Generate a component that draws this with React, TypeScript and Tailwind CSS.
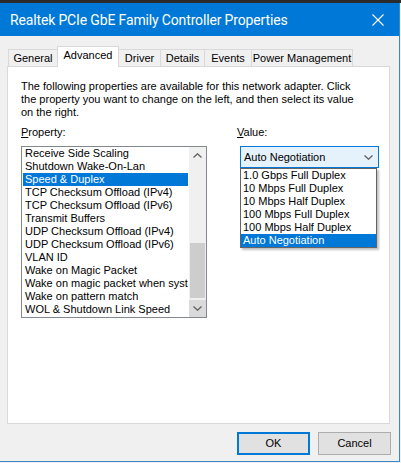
import React from "react";

const items = [
  "Receive Side Scaling",
  "Shutdown Wake-On-Lan",
  "Speed & Duplex",
  "TCP Checksum Offload (IPv4)",
  "TCP Checksum Offload (IPv6)",
  "Transmit Buffers",
  "UDP Checksum Offload (IPv4)",
  "UDP Checksum Offload (IPv6)",
  "VLAN ID",
  "Wake on Magic Packet",
  "Wake on magic packet when system is in the S0ix power state",
  "Wake on pattern match",
  "WOL & Shutdown Link Speed",
];

const values = [
  "1.0 Gbps Full Duplex",
  "10 Mbps Full Duplex",
  "10 Mbps Half Duplex",
  "100 Mbps Full Duplex",
  "100 Mbps Half Duplex",
  "Auto Negotiation",
];

const tabs = [
  { label: "General", w: "w-[49px]" },
  { label: "Advanced", w: "w-[62px]", active: true },
  { label: "Driver", w: "w-[41px]" },
  { label: "Details", w: "w-[44px]" },
  { label: "Events", w: "w-[47px]" },
  { label: "Power Management", w: "w-[102px]" },
];

function Chevron({ up = false, className = "" }: { up?: boolean; className?: string }) {
  return (
    <svg width="9" height="5" viewBox="0 0 9 5" className={className}>
      <path
        d={up ? "M0.5 4.5 L4.5 0.8 L8.5 4.5" : "M0.5 0.5 L4.5 4.2 L8.5 0.5"}
        fill="none"
        stroke="#606060"
        strokeWidth="1.3"
      />
    </svg>
  );
}

export default function App() {
  return (
    <div className="w-[401px] h-[463px] bg-[#f0f0f0] font-['Liberation_Sans',Arial,sans-serif] text-[11px] leading-[13px] text-black overflow-hidden">
      <div className="h-[3px] bg-[#2b2b2b]" />
      <div className="w-[400px] h-[459px] flex flex-col border-r border-b border-[#3a87c7]">
        {/* Title bar */}
        <div className="h-[33px] shrink-0 bg-[#0078d7] flex items-center justify-between pl-[10px] pr-[15px]">
          <span className="font-['Roboto',sans-serif] text-[14px] tracking-[-0.15px] leading-[20px] text-white">
            Realtek PCIe GbE Family Controller Properties
          </span>
          <svg width="12" height="12" viewBox="0 0 12 12">
            <path d="M0.5 0.5 L11.5 11.5 M11.5 0.5 L0.5 11.5" stroke="white" strokeWidth="1.1" />
          </svg>
        </div>

        {/* Tabs */}
        <div className="mt-[10px] pl-[8px] flex items-end h-[21px] -mb-[1px] relative z-10">
          {tabs.map((t, i) =>
            t.active ? (
              <div
                key={t.label}
                className={`${t.w} h-[21px] bg-white border border-b-0 border-[#d9d9d9] flex justify-center pt-[2px]`}
              >
                {t.label}
              </div>
            ) : (
              <div
                key={t.label}
                className={`${t.w} h-[17px] mb-[1px] bg-[#f0f0f0] border-t border-[#d9d9d9] ${
                  i === 2 ? "" : "border-l"
                } ${i === tabs.length - 1 ? "border-r" : ""} flex items-center justify-center`}
              >
                {t.label}
              </div>
            )
          )}
        </div>

        {/* Panel */}
        <div className="ml-[7px] w-[383px] h-[358px] shrink-0 bg-white border border-[#d9d9d9] pl-[13px] pt-[13px]">
          <div className="whitespace-nowrap">
            The following properties are available for this network adapter. Click
            <br />
            the property you want to change on the left, and then select its value
            <br />
            on the right.
          </div>

          <div className="flex mt-[7px]">
            {/* Property column */}
            <div className="w-[216px] shrink-0">
              <div>
                <span className="underline underline-offset-[1px]">P</span>roperty:
              </div>
              <div className="mt-[7px] w-[186px] h-[172px] border border-[#828790] flex">
                <div className="flex-1 min-w-0 p-[1px] pt-0 overflow-hidden">
                  {items.map((it) => (
                    <div
                      key={it}
                      className={`h-[13px] pl-[2px] whitespace-nowrap overflow-hidden ${
                        it === "Speed & Duplex" ? "bg-[#0078d7] text-white" : ""
                      }`}
                    >
                      {it}
                    </div>
                  ))}
                </div>
                <div className="w-[17px] shrink-0 bg-[#f0f0f0] flex flex-col">
                  <div className="h-[17px] flex items-center justify-center">
                    <Chevron up />
                  </div>
                  <div className="flex-1 relative flex flex-col">
                    <div className="h-[79px]" />
                    <div className="h-[55px] mx-[1px] bg-[#cdcdcd]" />
                  </div>
                  <div className="h-[17px] bg-[#dadada] flex items-center justify-center">
                    <Chevron />
                  </div>
                </div>
              </div>
            </div>

            {/* Value column */}
            <div>
              <div>
                <span className="underline underline-offset-[1px]">V</span>alue:
              </div>
              <div className="mt-[7px] ml-[3px] relative w-[139px]">
                <div className="h-[22px] border border-[#0078d7] bg-[#e5f1fb] flex items-center justify-between pl-[3px] pr-[5px]">
                  <span>Auto Negotiation</span>
                  <Chevron />
                </div>
                <div className="absolute left-0 top-[22px] w-[137px] bg-white border border-[#646464] shadow-[2px_2px_2px_rgba(0,0,0,0.25)]">
                  {values.map((v) => (
                    <div
                      key={v}
                      className={`h-[13px] pl-[2px] whitespace-nowrap ${
                        v === "Auto Negotiation" ? "bg-[#0078d7] text-white" : ""
                      }`}
                    >
                      {v}
                    </div>
                  ))}
                </div>
              </div>
            </div>
          </div>
        </div>

        {/* Buttons */}
        <div className="mt-[8px] flex justify-end gap-[8px] pr-[8px]">
          <button className="w-[73px] h-[23px] bg-[#e1e1e1] border-2 border-[#0078d7] text-[11px] leading-[13px]">
            OK
          </button>
          <button className="w-[73px] h-[23px] bg-[#e1e1e1] border border-[#adadad] text-[11px] leading-[13px]">
            Cancel
          </button>
        </div>
      </div>
    </div>
  );
}
